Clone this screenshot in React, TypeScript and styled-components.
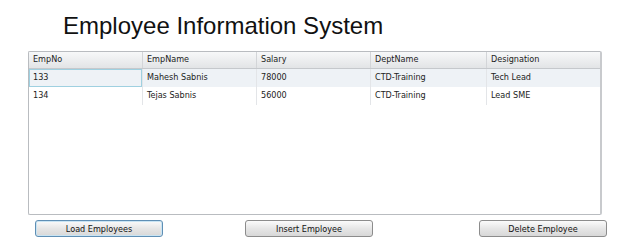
import React from 'react';
import styled, { createGlobalStyle } from 'styled-components';

const GlobalStyle = createGlobalStyle`
    html, body {
        margin: 0;
        padding: 0;
        background: #ffffff;
    }
    body {
        font-family: "DejaVu Sans Condensed", "DejaVu Sans", Verdana, sans-serif;
        color: #222;
    }
`;

interface Employee {
    empNo: number;
    empName: string;
    salary: number;
    deptName: string;
    designation: string;
}

const employees: Employee[] = [
    { empNo: 133, empName: 'Mahesh Sabnis', salary: 78000, deptName: 'CTD-Training', designation: 'Tech Lead' },
    { empNo: 134, empName: 'Tejas Sabnis', salary: 56000, deptName: 'CTD-Training', designation: 'Lead SME' },
];

const columns = ['EmpNo', 'EmpName', 'Salary', 'DeptName', 'Designation'];
const widths = [114, 114, 114, 116, 114];

const Page = styled.div`
    width: 627px;
    height: 246px;
    padding: 9px 0 0 0;
    box-sizing: border-box;
`;

const Title = styled.h1`
    margin: 0 0 0 63px;
    height: 42px;
    font-family: "Liberation Sans", Arial, sans-serif;
    font-weight: normal;
    font-size: 24px;
    line-height: 33px;
    color: #111;
`;

const Grid = styled.div`
    margin-left: 28px;
    width: 574px;
    height: 164px;
    box-sizing: border-box;
    border: 1px solid #b9bcc0;
    border-radius: 2px;
    border-right: 2px solid #c8cacd;
    display: flex;
    flex-direction: column;
    overflow: hidden;
`;

const Row = styled.div<{ $header?: boolean; $alt?: boolean }>`
    display: grid;
    grid-template-columns: ${widths.map((w) => `${w}px`).join(' ')};
    height: ${(p) => (p.$header ? '16px' : '18px')};
    background: ${(p) =>
        p.$header
            ? 'linear-gradient(#f7f8f9, #e2e4e6)'
            : p.$alt
            ? '#eef2f6'
            : '#ffffff'};
    border-bottom: ${(p) => (p.$header ? '1px solid #c5c8cc' : 'none')};
`;

const Cell = styled.div<{ $header?: boolean; $focus?: boolean; $last?: boolean }>`
    box-sizing: border-box;
    padding-left: 4px;
    font-size: 9px;
    line-height: ${(p) => (p.$header ? '15px' : '17px')};
    color: #222;
    white-space: nowrap;
    border-right: ${(p) => (p.$last ? 'none' : p.$header ? '1px solid #d3d5d8' : '1px solid #e3e5e8')};
    ${(p) => p.$focus && 'box-shadow: inset 0 0 0 1px #9fd0e0;'}
`;

const ButtonBar = styled.div`
    display: flex;
    margin: 5px 0 0 35px;
    width: 572px;
`;

const Button = styled.button<{ $focus?: boolean; $push?: string }>`
    width: 128px;
    height: 17px;
    padding: 0;
    margin-left: ${(p) => p.$push || '0'};
    box-sizing: border-box;
    font-family: "DejaVu Sans Condensed", "DejaVu Sans", Verdana, sans-serif;
    font-size: 9px;
    color: #111;
    background: linear-gradient(#fbfbfb, #e6e6e6 50%, #d8d8d8);
    border: 1px solid ${(p) => (p.$focus ? '#5f8fb5' : '#8c8c8c')};
    border-radius: 3px;
    ${(p) => p.$focus && 'box-shadow: inset 0 0 0 1px #c9e4f3;'}
`;

const App: React.FC = () => {
    return (
        <Page>
            <GlobalStyle />
            <Title>Employee Information System</Title>
            <Grid>
                <Row $header>
                    {columns.map((c, i) => (
                        <Cell key={c} $header $last={i === columns.length - 1}>{c}</Cell>
                    ))}
                </Row>
                {employees.map((e, r) => (
                    <Row key={e.empNo} $alt={r === 0}>
                        <Cell $focus={r === 0}>{e.empNo}</Cell>
                        <Cell>{e.empName}</Cell>
                        <Cell>{e.salary}</Cell>
                        <Cell>{e.deptName}</Cell>
                        <Cell $last>{e.designation}</Cell>
                    </Row>
                ))}
            </Grid>
            <ButtonBar>
                <Button $focus>Load Employees</Button>
                <Button $push="82px">Insert Employee</Button>
                <Button $push="auto">Delete Employee</Button>
            </ButtonBar>
        </Page>
    );
};

export default App;
